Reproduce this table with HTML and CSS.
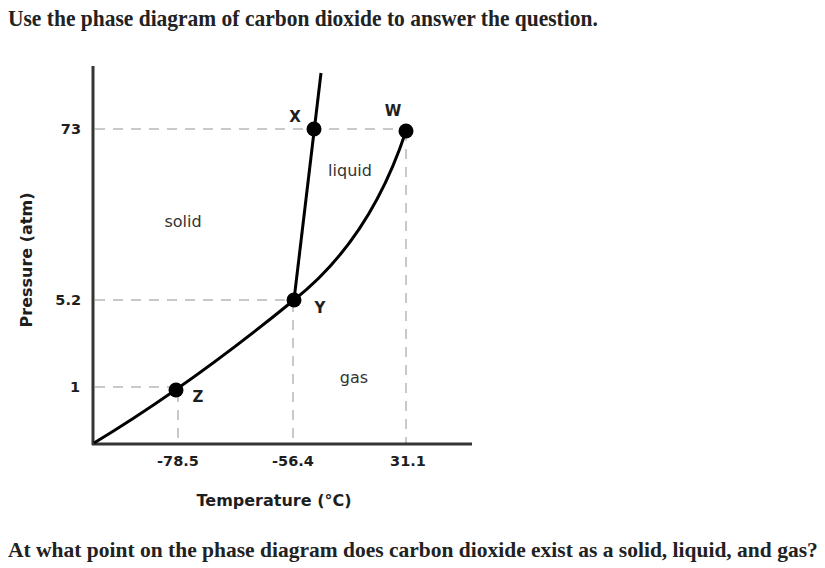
FILE: index.html
```html
<!DOCTYPE html>
<html>
<head>
<meta charset="utf-8">
<link rel="stylesheet" href="styles.css">
</head>
<body>
<div class="title"><span class="title-text">Use the phase diagram of carbon dioxide to answer the question.</span></div>
<svg class="chart" width="480" height="500" viewBox="0 34 480 500" xmlns="http://www.w3.org/2000/svg">
  <g class="dash">
    <line x1="95" y1="129" x2="406" y2="129"/>
    <line x1="95" y1="300" x2="294" y2="300"/>
    <line x1="95" y1="387" x2="176" y2="387"/>
    <line x1="178" y1="392" x2="178" y2="443"/>
    <line x1="293" y1="302" x2="293" y2="443"/>
    <line x1="406" y1="131" x2="406" y2="443"/>
  </g>
  <g class="axis">
    <line x1="93" y1="66" x2="93" y2="445"/>
    <line x1="92" y1="444" x2="472" y2="444"/>
  </g>
  <g class="curve">
    <path d="M294 300 L321 73"/>
    <path d="M94 443 Q190 385 294 300"/>
    <path d="M294 300 Q370 240 406 131"/>
  </g>
  <g class="dot">
    <circle cx="314" cy="129" r="7.5"/>
    <circle cx="406" cy="131" r="7.5"/>
    <circle cx="294" cy="300" r="7.5"/>
    <circle cx="176" cy="390" r="7.5"/>
  </g>
  <g class="pt">
    <text x="295" y="117">X</text>
    <text x="393" y="111">W</text>
    <text x="320" y="308">Y</text>
    <text x="198" y="397">Z</text>
  </g>
  <g class="region">
    <text x="183" y="221">solid</text>
    <text x="350" y="170">liquid</text>
    <text x="354" y="377">gas</text>
  </g>
  <g class="ytick">
    <text x="81" y="129">73</text>
    <text x="81" y="300">5.2</text>
    <text x="80" y="387">1</text>
  </g>
  <g class="xtick">
    <text x="178" y="461">-78.5</text>
    <text x="293" y="461">-56.4</text>
    <text x="408" y="461">31.1</text>
  </g>
  <text class="axis-title" x="274" y="500">Temperature (°C)</text>
  <text class="axis-title" x="0" y="0" transform="translate(26 260) rotate(-90)">Pressure (atm)</text>
</svg>
<div class="question"><span class="question-text">At what point on the phase diagram does carbon dioxide exist as a solid, liquid, and gas?</span></div>
</body>
</html>
```
FILE: styles.css
```css
html, body {
  margin: 0;
  padding: 0;
  background: #ffffff;
}
body {
  width: 825px;
  height: 568px;
  overflow: hidden;
  font-family: "Liberation Serif", "Times New Roman", serif;
  color: #222222;
}
.title {
  padding: 4px 0 0 8px;
  height: 30px;
  line-height: 30px;
  font-size: 23px;
  font-weight: bold;
  white-space: nowrap;
}
.title-text {
  display: inline-block;
  transform: scaleX(0.934);
  transform-origin: left center;
}
.chart {
  display: block;
}
.question {
  padding: 2px 0 0 8px;
  height: 28px;
  line-height: 28px;
  font-size: 22px;
  font-weight: bold;
  white-space: nowrap;
}
.question-text {
  display: inline-block;
  transform: scaleX(0.977);
  transform-origin: left center;
}
.dash line {
  stroke: #c9c9c9;
  stroke-width: 2;
  stroke-dasharray: 10 8;
}
.axis line {
  stroke: #353535;
  stroke-width: 3;
}
.curve path {
  fill: none;
  stroke: #000000;
  stroke-width: 3;
}
.dot circle {
  fill: #000000;
}
.chart text {
  font-family: "DejaVu Sans", Verdana, sans-serif;
  dominant-baseline: central;
  fill: #1e1e1e;
}
.pt text {
  font-size: 15px;
  font-weight: bold;
  text-anchor: middle;
}
.region text {
  font-size: 16px;
  text-anchor: middle;
  fill: #333333;
}
.ytick text {
  font-size: 14.5px;
  font-weight: bold;
  text-anchor: end;
}
.xtick text {
  font-size: 14.5px;
  font-weight: bold;
  text-anchor: middle;
}
.chart .axis-title {
  font-size: 16px;
  font-weight: bold;
  text-anchor: middle;
}
```
